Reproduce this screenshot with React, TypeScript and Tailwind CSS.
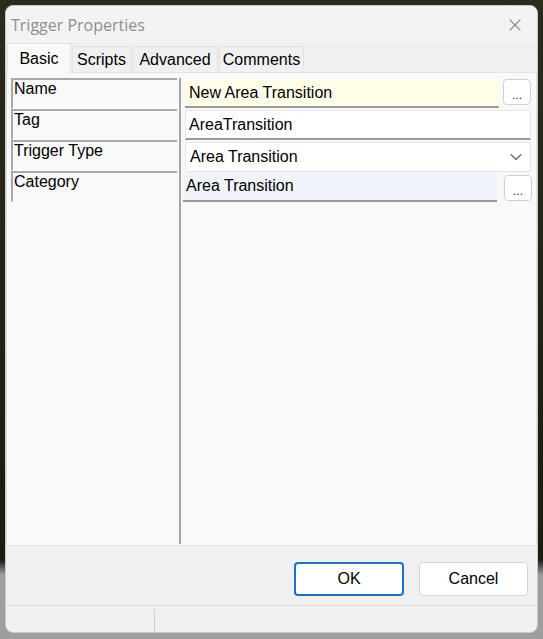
import { X, ChevronDown } from 'lucide-react';

const labels = ['Name', 'Tag', 'Trigger Type', 'Category'];
const tabs = [
  { name: 'Scripts', w: 'w-[59px]' },
  { name: 'Advanced', w: 'w-[86px]' },
  { name: 'Comments', w: 'w-[85px]' },
];

function DotsButton() {
  return (
    <button className="w-[28px] h-[26px] ml-[4px] rounded-[4px] border border-[#cfcfcf] bg-white flex items-end justify-center pb-[3px] text-[12px] leading-none text-[#333]">
      ...
    </button>
  );
}

export default function App() {
  return (
    <div className="w-[543px] h-[639px] pt-[5px] pl-[5px] pr-[5px] pb-[6px] bg-[linear-gradient(to_bottom,#2d2b1d_0px,#1c1b12_560px,#9e9e9e_575px)] font-['Liberation_Sans',sans-serif]">
      <div className="h-full rounded-[8px] bg-[#f0f0f0] flex flex-col overflow-hidden border border-[#c8c8c8]">
        {/* title bar */}
        <div className="h-[37px] shrink-0 flex items-center justify-between pl-[5px] pr-[12px] bg-[#f3f3f3]">
          <span className="font-['Open_Sans',sans-serif] text-[16px] text-[#8f8f8f]">Trigger Properties</span>
          <X className="w-[20px] h-[20px] text-[#8a8a8a]" strokeWidth={1.3} />
        </div>

        {/* tabs */}
        <div className="h-[29px] shrink-0 flex items-end pl-[1px] gap-[1px] text-[16px] text-black">
          <div className="h-[30px] w-[64px] bg-[#f9f9f9] border border-b-0 border-[#e2e2e2] flex items-center justify-center -mb-[1px] relative">
            Basic
          </div>
          {tabs.map((t) => (
            <div
              key={t.name}
              className={`${t.w} h-[26px] bg-[#f0f0f0] border border-b-0 border-[#e2e2e2] flex items-center justify-center`}
            >
              {t.name}
            </div>
          ))}
        </div>

        {/* content panel */}
        <div className="h-[474px] shrink-0 bg-[#f9f9f9] border border-[#e3e3e3] flex pt-[5px] pl-[4px] pr-[4px]">
          <div className="w-[170px] flex flex-col">
            {labels.map((l) => (
              <div
                key={l}
                className="h-[31px] border-t-2 border-l-2 border-[#a9a9a9] border-b border-b-white pl-[1px] text-[16px] leading-[18px] text-black"
              >
                {l}
              </div>
            ))}
          </div>
          <div className="w-[2px] h-[466px] bg-[#a6a6a6] ml-[2px]" />
          <div className="flex-1 flex flex-col pl-[4px]">
            <div className="h-[32px] flex items-start pt-[1px]">
              <div className="w-[314px] h-[29px] bg-[#fffde8] border-b-2 border-[#9a9a9a] flex items-center pl-[4px] text-[16px] text-black">
                New Area Transition
              </div>
              <DotsButton />
            </div>
            <div className="h-[31px] flex items-start">
              <div className="w-[346px] h-[30px] bg-white border border-[#e5e5e5] border-b-2 border-b-[#9a9a9a] rounded-t-[2px] flex items-center pl-[3px] text-[16px] text-black">
                AreaTransition
              </div>
            </div>
            <div className="h-[31px] flex items-start pt-[1px]">
              <div className="w-[346px] h-[30px] bg-white border border-[#e5e5e5] rounded-[2px] flex items-center justify-between pl-[4px] pr-[4px] text-[16px] text-black">
                <span>Area Transition</span>
                <ChevronDown className="w-[20px] h-[20px] text-[#666]" strokeWidth={1.4} />
              </div>
            </div>
            <div className="h-[31px] flex items-start -ml-[2px]">
              <div className="w-[314px] h-[30px] bg-[#f0f4fa] border-b-2 border-[#9a9a9a] flex items-center pl-[3px] text-[16px] text-black">
                Area Transition
              </div>
              <div className="pt-[3px] ml-[3px]">
                <DotsButton />
              </div>
            </div>
          </div>
        </div>

        {/* button bar */}
        <div className="h-[59px] shrink-0 flex items-center justify-end gap-[15px] pr-[9px] pt-[6px]">
          <button className="w-[110px] h-[34px] rounded-[4px] border-2 border-[#1a73c8] bg-white text-[16px] text-black">
            OK
          </button>
          <button className="w-[109px] h-[34px] rounded-[4px] border border-[#d4d4d4] bg-white text-[16px] text-black">
            Cancel
          </button>
        </div>

        {/* status bar */}
        <div className="flex-1 border-t border-[#d9d9d9] flex">
          <div className="w-[149px] border-r border-[#cfcfcf] mt-[3px]" />
        </div>
      </div>
    </div>
  );
}
